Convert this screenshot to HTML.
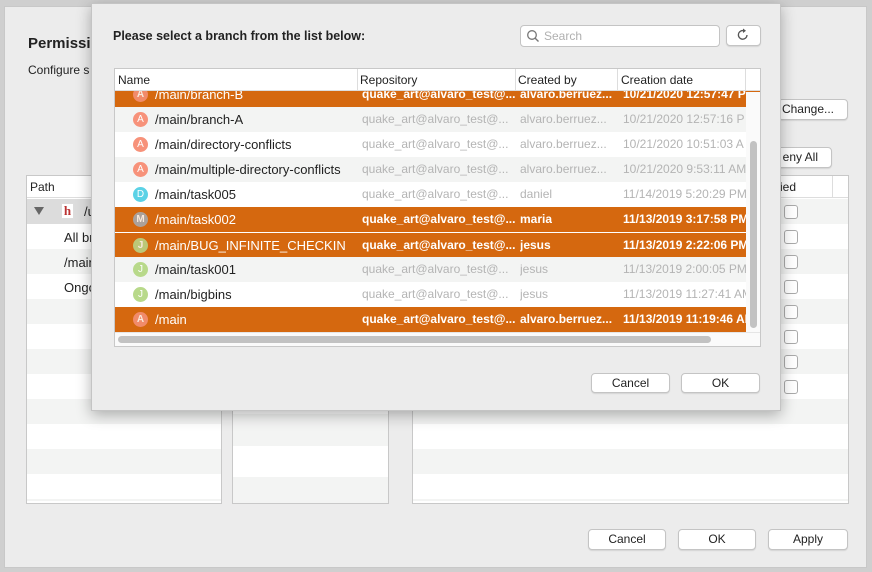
<!DOCTYPE html>
<html><head><meta charset="utf-8"><style>
*{margin:0;padding:0;box-sizing:border-box}
body{width:872px;height:572px;overflow:hidden;background:#cfcfcf;font-family:"Liberation Sans",sans-serif;font-size:12px;color:#222;position:relative}
.a{position:absolute}
.btn{position:absolute;background:#fff;border:1px solid #c4c4c4;border-radius:4px;text-align:center;font-size:12px;line-height:18px;color:#222;box-shadow:0 1px 1px rgba(0,0,0,.1)}
.row{position:absolute;left:0;width:646px;height:25px;line-height:25px;font-size:12px}
.row span{position:absolute;white-space:nowrap;overflow:hidden}
.row span.n{font-size:13px;font-weight:normal}
.av{position:absolute;left:18px;top:5px;width:15px;height:15px;border-radius:50%;color:#fff;font-size:10px;line-height:15px;text-align:center}
.sel{background:#d5680f;color:#fff;font-weight:bold}
.sel .av{opacity:.85}
.g{color:#b4b4b4}
.cb{position:absolute;left:784px;width:14px;height:14px;border:1px solid #aaa;border-radius:3px;background:#fff}
</style></head><body>
<div class="a" style="left:4px;top:6px;width:863px;height:562px;background:#ececec;border:1px solid #c8c8c8"></div>
<div class="a" style="left:28px;top:35px;font-size:15px;font-weight:bold">Permissio</div>
<div class="a" style="left:28px;top:63px;font-size:12px">Configure s</div>
<div class="btn" style="left:778px;top:99px;width:70px;height:21px;text-align:right;padding-right:13px">Change...</div>
<div class="btn" style="left:770px;top:147px;width:62px;height:21px;text-align:right;padding-right:13px">eny All</div>
<div class="a" style="left:26px;top:175px;width:196px;height:329px;border:1px solid #c8c8c8;background:repeating-linear-gradient(#fff 0 25px,#f3f4f3 25px 50px);background-position:0 -2px"></div>
<div class="a" style="left:27px;top:176px;width:194px;height:22px;background:#fff;border-bottom:1px solid #ddd;padding:4px 0 0 3px">Path</div>
<div class="a" style="left:27px;top:199px;width:194px;height:25px;background:#dcdcdc"></div>
<div class="a" style="left:34px;top:207px;width:0;height:0;border-left:5px solid transparent;border-right:5px solid transparent;border-top:8px solid #666"></div>
<div class="a" style="left:61px;top:203px;width:13px;height:16px;background:#fff;border:1px solid #ddd;color:#b33;font-weight:bold;font-family:'Liberation Serif',serif;font-size:13px;line-height:14px;text-align:center">h</div>
<div class="a" style="left:84px;top:204px;font-size:13px">/u</div>
<div class="a" style="left:64px;top:230px;font-size:13px">All br</div>
<div class="a" style="left:64px;top:255px;font-size:13px">/main</div>
<div class="a" style="left:64px;top:280px;font-size:13px">Ongo</div>
<div class="a" style="left:232px;top:350px;width:157px;height:154px;border:1px solid #c8c8c8;background:repeating-linear-gradient(#f3f4f3 0 32px,#fff 32px 63px)"></div>
<div class="a" style="left:412px;top:175px;width:437px;height:329px;border:1px solid #c8c8c8;background:repeating-linear-gradient(#fff 0 25px,#f3f4f3 25px 50px);background-position:0 -2px"></div>
<div class="a" style="left:413px;top:176px;width:435px;height:22px;background:#fff;border-bottom:1px solid #ddd"></div>
<div class="a" style="left:780px;top:180px">ied</div>
<div class="a" style="left:832px;top:176px;width:1px;height:22px;background:#ddd"></div>
<div class="cb" style="top:205px"></div><div class="cb" style="top:230px"></div><div class="cb" style="top:255px"></div><div class="cb" style="top:280px"></div><div class="cb" style="top:305px"></div><div class="cb" style="top:330px"></div><div class="cb" style="top:355px"></div><div class="cb" style="top:380px"></div>
<div class="btn" style="left:588px;top:529px;width:78px;height:21px">Cancel</div>
<div class="btn" style="left:678px;top:529px;width:78px;height:21px">OK</div>
<div class="btn" style="left:768px;top:529px;width:80px;height:21px">Apply</div>
<div class="a" style="left:91px;top:3px;width:690px;height:408px;background:#ececec;border:1px solid #c4c4c4;box-shadow:0 4px 14px rgba(0,0,0,.3)"></div>
<div class="a" style="left:113px;top:29px;font-weight:bold;font-size:12.5px">Please select a branch from the list below:</div>
<div class="a" style="left:520px;top:25px;width:200px;height:22px;background:#fff;border:1px solid #c4c4c4;border-radius:4px"></div>
<svg class="a" style="left:526px;top:29px" width="14" height="14"><circle cx="6" cy="6" r="4.3" stroke="#777" stroke-width="1.3" fill="none"/><line x1="9.2" y1="9.2" x2="12.5" y2="12.5" stroke="#777" stroke-width="1.4"/></svg>
<div class="a" style="left:544px;top:29px;color:#b0b0b0">Search</div>
<div class="btn" style="left:726px;top:25px;width:35px;height:21px"></div>
<svg class="a" style="left:736px;top:28px" width="14" height="14"><path d="M11 7A4.3 4.3 0 1 1 8 2.8" stroke="#555" stroke-width="1.3" fill="none"/><path d="M7 0.5L10 2.8L7 5Z" fill="#555"/></svg>
<div class="a" style="left:114px;top:68px;width:647px;height:279px;background:#fff;border:1px solid #c8c8c8;overflow:hidden">
 <div class="a" style="left:0;top:13px;width:646px;height:250px;">
  <div class="row sel" style="top:0"><div class="av" style="background:#f7927a">A</div><span class="n" style="left:40px">/main/branch-B</span><span style="left:247px">quake_art@alvaro_test@...</span><span style="left:405px">alvaro.berruez...</span><span style="left:508px">10/21/2020 12:57:47 P</span></div>
  <div class="row" style="top:25px;background:#f3f4f3"><div class="av" style="background:#f7927a">A</div><span class="n" style="left:40px">/main/branch-A</span><span class="g" style="left:247px">quake_art@alvaro_test@...</span><span class="g" style="left:405px">alvaro.berruez...</span><span class="g" style="left:508px">10/21/2020 12:57:16 P</span></div>
  <div class="row" style="top:50px"><div class="av" style="background:#f7927a">A</div><span class="n" style="left:40px">/main/directory-conflicts</span><span class="g" style="left:247px">quake_art@alvaro_test@...</span><span class="g" style="left:405px">alvaro.berruez...</span><span class="g" style="left:508px">10/21/2020 10:51:03 A</span></div>
  <div class="row" style="top:75px;background:#f3f4f3"><div class="av" style="background:#f7927a">A</div><span class="n" style="left:40px">/main/multiple-directory-conflicts</span><span class="g" style="left:247px">quake_art@alvaro_test@...</span><span class="g" style="left:405px">alvaro.berruez...</span><span class="g" style="left:508px">10/21/2020 9:53:11 AM</span></div>
  <div class="row" style="top:100px"><div class="av" style="background:#5bd2e6">D</div><span class="n" style="left:40px">/main/task005</span><span class="g" style="left:247px">quake_art@alvaro_test@...</span><span class="g" style="left:405px">daniel</span><span class="g" style="left:508px">11/14/2019 5:20:29 PM</span></div>
  <div class="row sel" style="top:125px"><div class="av" style="background:#a4acb4">M</div><span class="n" style="left:40px">/main/task002</span><span style="left:247px">quake_art@alvaro_test@...</span><span style="left:405px">maria</span><span style="left:508px">11/13/2019 3:17:58 PM</span></div>
  <div class="row sel" style="top:150px;border-top:1px solid #fff"><div class="av" style="background:#b8d98a">J</div><span class="n" style="left:40px">/main/BUG_INFINITE_CHECKIN</span><span style="left:247px">quake_art@alvaro_test@...</span><span style="left:405px">jesus</span><span style="left:508px">11/13/2019 2:22:06 PM</span></div>
  <div class="row" style="top:175px;background:#f3f4f3"><div class="av" style="background:#b8d98a">J</div><span class="n" style="left:40px">/main/task001</span><span class="g" style="left:247px">quake_art@alvaro_test@...</span><span class="g" style="left:405px">jesus</span><span class="g" style="left:508px">11/13/2019 2:00:05 PM</span></div>
  <div class="row" style="top:200px"><div class="av" style="background:#b8d98a">J</div><span class="n" style="left:40px">/main/bigbins</span><span class="g" style="left:247px">quake_art@alvaro_test@...</span><span class="g" style="left:405px">jesus</span><span class="g" style="left:508px">11/13/2019 11:27:41 AM</span></div>
  <div class="row sel" style="top:225px"><div class="av" style="background:#f7927a">A</div><span class="n" style="left:40px">/main</span><span style="left:247px">quake_art@alvaro_test@...</span><span style="left:405px">alvaro.berruez...</span><span style="left:508px">11/13/2019 11:19:46 AM</span></div>
 </div>
 <div class="a" style="left:0;top:0;width:646px;height:22px;background:#fff;border-bottom:1px solid #ddd">
  <span class="a" style="left:3px;top:4px">Name</span><span class="a" style="left:242px;top:0;width:1px;height:22px;background:#ddd"></span>
  <span class="a" style="left:245px;top:4px">Repository</span><span class="a" style="left:400px;top:0;width:1px;height:22px;background:#ddd"></span>
  <span class="a" style="left:403px;top:4px">Created by</span><span class="a" style="left:502px;top:0;width:1px;height:22px;background:#ddd"></span>
  <span class="a" style="left:506px;top:4px">Creation date</span><span class="a" style="left:630px;top:0;width:1px;height:22px;background:#ddd"></span>
 </div>
 <div class="a" style="left:631px;top:23px;width:15px;height:240px;background:#fafafa"></div>
 <div class="a" style="left:635px;top:72px;width:7px;height:187px;background:#c2c2c2;border-radius:4px"></div>
 <div class="a" style="left:0;top:263px;width:646px;height:15px;background:#fafafa;border-top:1px solid #e5e5e5"></div>
 <div class="a" style="left:3px;top:267px;width:593px;height:7px;background:#c2c2c2;border-radius:4px"></div>
</div>
<div class="btn" style="left:591px;top:373px;width:79px;height:20px">Cancel</div>
<div class="btn" style="left:681px;top:373px;width:79px;height:20px">OK</div>
</body></html>
